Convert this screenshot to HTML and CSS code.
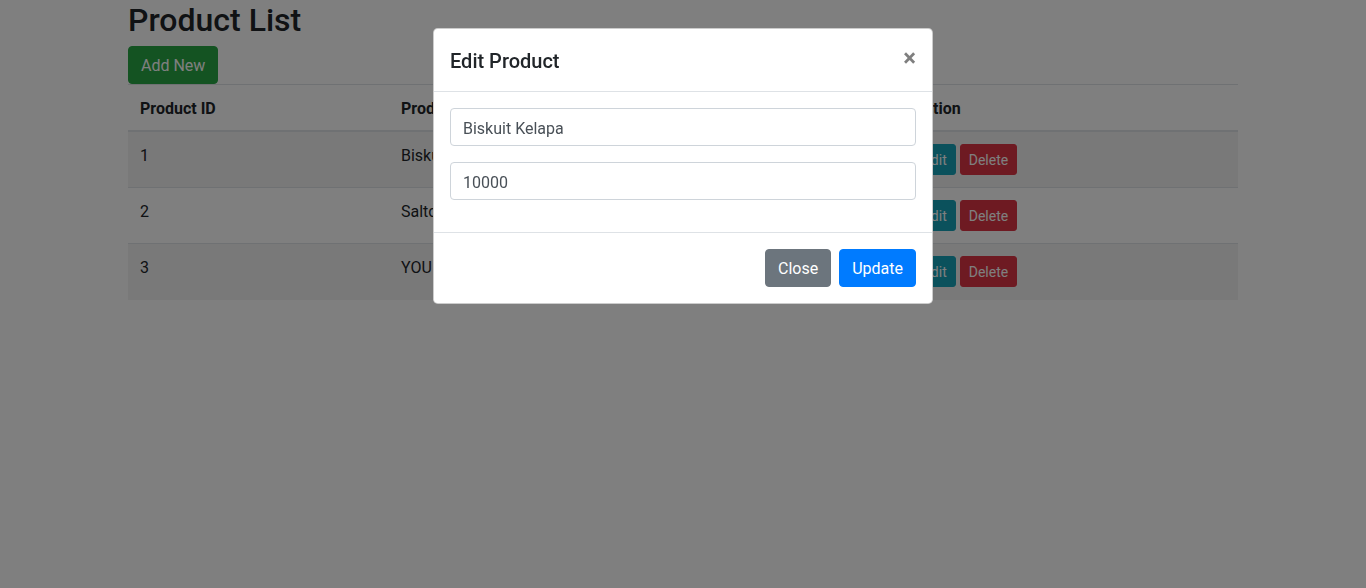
FILE: index.html
```html
<!DOCTYPE html>
<html lang="en">
<head>
<meta charset="utf-8">
<title>Product List</title>
<link rel="stylesheet" href="styles.css">
</head>
<body>
<div class="container">
  <h2 class="title">Product List</h2>
  <button class="btn btn-success">Add New</button>
  <table class="table">
    <thead>
      <tr>
        <th class="c1">Product ID</th>
        <th class="c2">Product Name</th>
        <th class="c3">Price</th>
        <th class="c4">Action</th>
      </tr>
    </thead>
    <tbody>
      <tr class="odd">
        <td>1</td><td>Biskuit Kelapa</td><td>10000</td>
        <td><span class="actions"><button class="btn-sm btn-info">Edit</button><button class="btn-sm btn-danger">Delete</button></span></td>
      </tr>
      <tr>
        <td>2</td><td>Saltcheese</td><td>8000</td>
        <td><span class="actions"><button class="btn-sm btn-info">Edit</button><button class="btn-sm btn-danger">Delete</button></span></td>
      </tr>
      <tr class="odd">
        <td>3</td><td>YOU C1000</td><td>7000</td>
        <td><span class="actions"><button class="btn-sm btn-info">Edit</button><button class="btn-sm btn-danger">Delete</button></span></td>
      </tr>
    </tbody>
  </table>
</div>

<div class="backdrop"></div>

<div class="modal">
  <div class="modal-content">
    <div class="modal-header">
      <h5 class="modal-title">Edit Product</h5>
      <button class="close" type="button">&times;</button>
    </div>
    <div class="modal-body">
      <div class="form-group"><input class="form-control" type="text" value="Biskuit Kelapa"></div>
      <div class="form-group"><input class="form-control" type="text" value="10000"></div>
    </div>
    <div class="modal-footer">
      <button class="btn btn-secondary">Close</button>
      <button class="btn btn-primary">Update</button>
    </div>
  </div>
</div>
</body>
</html>
```

FILE: styles.css
```css
* { box-sizing: border-box; }
html, body {
  margin: 0;
  padding: 0;
  height: 100%;
}
body {
  font-family: Roboto, "Liberation Sans", Arial, sans-serif;
  font-size: 16px;
  line-height: 1.5;
  color: #212529;
  background: #fff;
  overflow: hidden;
}
.container {
  width: 1140px;
  margin: 0 auto;
  padding: 0 15px;
}
.title {
  margin: 0 0 8px;
  padding-top: 1px;
  font-size: 32px;
  font-weight: 500;
  line-height: 38px;
  height: 38px;
}
button { font-family: inherit; }
.btn {
  display: inline-block;
  font-size: 16px;
  line-height: 24px;
  padding: 7px 12px 5px;
  border: 1px solid transparent;
  border-radius: 4px;
  color: #fff;
  cursor: pointer;
  vertical-align: middle;
}
.btn-success { background: #28a745; border-color: #28a745; }
.btn-secondary { background: #6c757d; border-color: #6c757d; }
.btn-primary { background: #007bff; border-color: #007bff; }
.table {
  width: 100%;
  border-collapse: collapse;
  margin-top: 0;
  color: #212529;
}
.table th, .table td {
  text-align: left;
  vertical-align: top;
  border-top: 1px solid #dee2e6;
  padding: 12px;
}
.table th {
  font-weight: 700;
  padding: 12px 12px 9px;
  border-bottom: 2px solid #dee2e6;
}
.table td { height: 56px; }
.c1 { width: 261px; }
.c2 { width: 256px; }
.c3 { width: 257px; }
.table tr.odd td { background: rgba(0,0,0,.05); }
.actions { display: flex; gap: 4px; }
.btn-sm {
  font-size: 14px;
  line-height: 21px;
  padding: 5px 8px 3px;
  border: 1px solid transparent;
  border-radius: 3px;
  color: #fff;
}
.btn-info { background: #17a2b8; border-color: #17a2b8; }
.btn-danger { background: #dc3545; border-color: #dc3545; }

.backdrop {
  position: fixed;
  inset: 0;
  background: rgba(0,0,0,.5);
}
.modal {
  position: fixed;
  inset: 0;
  display: flex;
  justify-content: center;
  align-items: flex-start;
}
.modal-content {
  width: 500px;
  margin-top: 28px;
  background: #fff;
  border: 1px solid rgba(0,0,0,.2);
  border-radius: 4.8px;
  display: flex;
  flex-direction: column;
}
.modal-header {
  display: flex;
  align-items: flex-start;
  justify-content: space-between;
  padding: 16px;
  border-bottom: 1px solid #dee2e6;
}
.modal-title {
  margin: 1px 0 -1px;
  font-size: 20px;
  font-weight: 500;
  line-height: 30px;
}
.close {
  background: transparent;
  border: 0;
  padding: 17px 16px 15px;
  margin: -16px -16px -16px auto;
  font-size: 24px;
  font-weight: 700;
  line-height: 1;
  color: #000;
  opacity: .5;
  text-shadow: 0 1px 0 #fff;
}
.modal-body { padding: 16px; }
.form-group { margin-bottom: 16px; }
.form-control {
  display: block;
  width: 100%;
  height: 38px;
  padding: 7px 12px 5px;
  font-family: inherit;
  font-size: 16px;
  line-height: 24px;
  color: #495057;
  background: #fff;
  border: 1px solid #ced4da;
  border-radius: 4px;
}
.modal-footer {
  display: flex;
  justify-content: flex-end;
  align-items: center;
  padding: 12px;
  border-top: 1px solid #dee2e6;
}
.modal-footer .btn { margin: 4px; }
```
